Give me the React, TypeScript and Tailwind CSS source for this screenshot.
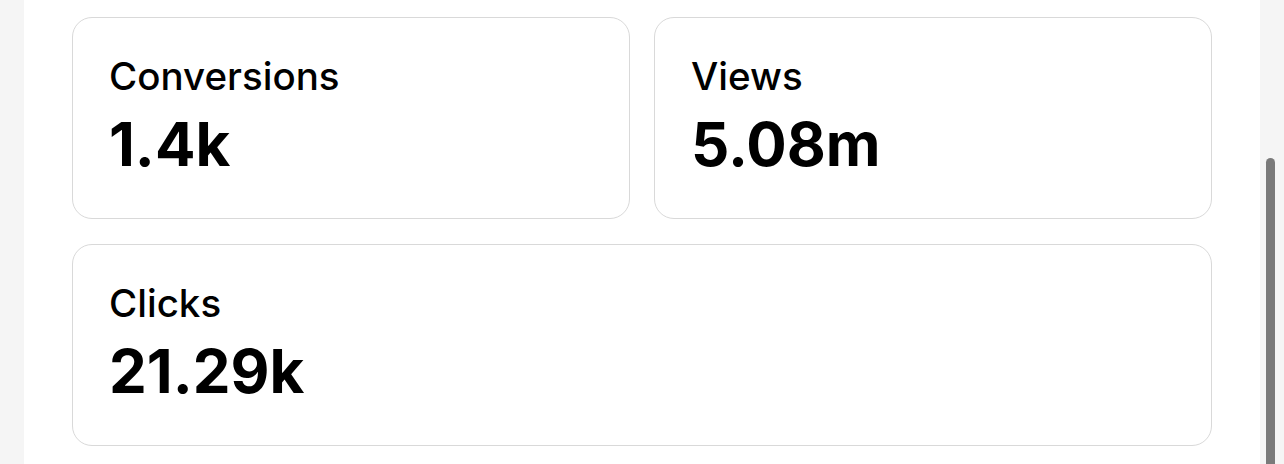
import React from "react";

function Card({ label, value, className = "" }: { label: string; value: string; className?: string }) {
  return (
    <div className={`h-[202px] rounded-[20px] border border-[#d9d9d9] bg-white pl-[36px] pt-[35px] ${className}`}>
      <div className="text-[38.5px] leading-[46px] font-medium text-black">{label}</div>
      <div className="mt-[15px] text-[60px] leading-[60px] font-bold text-black">{value}</div>
    </div>
  );
}

export default function App() {
  return (
    <div
      className="flex h-[464px] w-[1284px] overflow-hidden bg-white"
      style={{ fontFamily: "Inter, 'Noto Sans', sans-serif" }}
    >
      <div className="w-[24px] shrink-0 bg-[#f5f5f5]" />
      <div className="flex-1 bg-white pl-[48px] pr-[48px] pt-[17px]">
        <div className="grid grid-cols-2 gap-x-[24px] gap-y-[25px]">
          <Card label="Conversions" value="1.4k" />
          <Card label="Views" value="5.08m" />
          <Card label="Clicks" value="21.29k" className="col-span-2" />
        </div>
      </div>
      <div className="w-[24px] shrink-0 bg-[#f5f5f5] pl-[6px] pt-[158px]">
        <div className="h-[320px] w-[9px] rounded-full bg-[#7a7a7a]" />
      </div>
    </div>
  );
}
